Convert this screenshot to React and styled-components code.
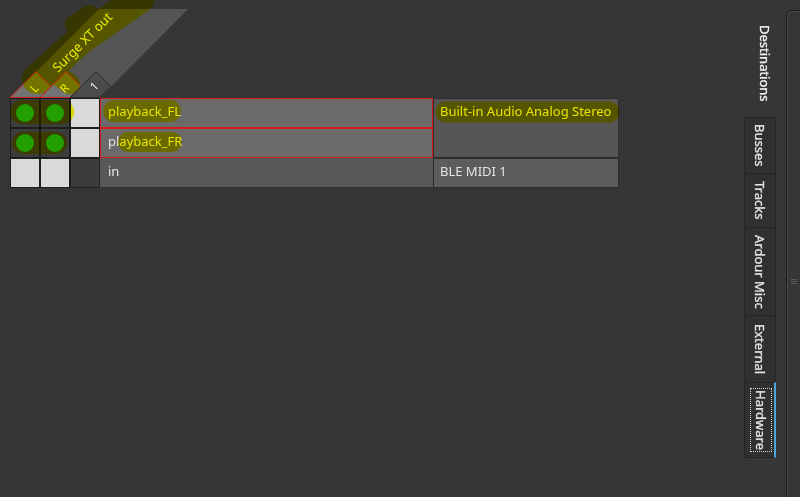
import React from 'react';
import styled, { createGlobalStyle } from 'styled-components';

const colors = {
  bg: '#363636',
  line: '#1d1d1d',
  red: '#d11d1d',
  text: '#e4e4e4',
  tabBorder: '#242424',
};

const GlobalStyle = createGlobalStyle`
  html, body {
    margin: 0;
    padding: 0;
    background: ${colors.bg};
  }
  body {
    font-family: "Noto Sans", "DejaVu Sans", sans-serif;
    font-size: 13px;
    color: ${colors.text};
  }
`;

const channels = [
  { name: 'L', hot: true },
  { name: 'R', hot: true },
  { name: '1', hot: false },
];

const rows = [
  { name: 'playback_FL', hot: true, cells: ['on', 'on', 'na'] },
  { name: 'playback_FR', hot: true, cells: ['on', 'on', 'na'] },
  { name: 'in', hot: false, cells: ['na', 'na', 'open'] },
];

const devices = [
  { name: 'Built-in Audio Analog Stereo', span: 2, shade: '#555555' },
  { name: 'BLE MIDI 1', span: 1, shade: '#5d5d5d' },
];

const tabs = [
  { name: 'Busses', h: 56 },
  { name: 'Tracks', h: 54 },
  { name: 'Ardour Misc', h: 88 },
  { name: 'External', h: 67 },
  { name: 'Hardware', h: 76, active: true },
];

// highlighter marks, page coordinates
const marks = [
  { d: 'M 37 79 L 80 40 L 140 -2', w: 30 },
  { d: 'M 56 74 L 70 84', w: 20 },
  { d: 'M 74 24 L 90 14', w: 18 },
  { d: 'M 22 112 L 62 112', w: 24 },
  { d: 'M 23 143 L 56 143', w: 22 },
  { d: 'M 114 111 L 170 111', w: 22 },
  { d: 'M 128 142 L 172 142', w: 20 },
  { d: 'M 446 112 L 609 112', w: 21 },
];

const channelShape = (x) =>
  `${x},88.5 ${x + 26},62.5 ${x + 41},77.5 ${x + 30},88.5`;

const ColumnHeader = () => (
  <HeaderSvg width="180" height="89" viewBox="0 0 180 89">
    <polygon points="0,89 89,0 178,0 90,89" fill="#555555" />
    <text
      x="72"
      y="33"
      transform="rotate(-45 72 33)"
      textAnchor="middle"
      dominantBaseline="central"
      fontSize="13"
    >
      Surge XT out
    </text>
    {channels.map((c, i) => {
      const cx = i * 30 + 24;
      const cy = i === 2 ? 77 : 79;
      return (
        <g key={c.name}>
          <polygon
            points={channelShape(i * 30)}
            fill={c.hot ? '#737373' : '#4b4b4b'}
            stroke={c.hot ? colors.red : '#2b2b2b'}
            strokeWidth="1"
          />
          <text
            x={cx}
            y={cy}
            transform={`rotate(-45 ${cx} ${cy})`}
            textAnchor="middle"
            dominantBaseline="central"
            fontSize="11.5"
          >
            {c.name}
          </text>
        </g>
      );
    })}
  </HeaderSvg>
);

const App = () => (
  <Page>
    <GlobalStyle />
    <Main>
      <ColumnHeader />
      <Table>
        <Grid>
          {rows.map((r) =>
            r.cells.map((kind, i) => (
              <Cell key={r.name + i} $na={kind === 'na'}>
                {kind === 'on' && <Dot />}
              </Cell>
            ))
          )}
        </Grid>
        <LabelCol>
          {rows.map((r) => (
            <RowLabel key={r.name} $hot={r.hot}>
              {r.name}
            </RowLabel>
          ))}
        </LabelCol>
        <DeviceCol>
          {devices.map((d) => (
            <DeviceCell key={d.name} $span={d.span} $shade={d.shade}>
              {d.name}
            </DeviceCell>
          ))}
        </DeviceCol>
      </Table>
    </Main>

    <Side>
      <TabArea>
        <Title>Destinations</Title>
        <TabList>
          {tabs.map((t) => (
            <Tab key={t.name} $h={t.h} $active={t.active}>
              {t.active ? <Focus>{t.name}</Focus> : t.name}
            </Tab>
          ))}
        </TabList>
      </TabArea>
      <Frame>
        <Grip>
          <i />
          <i />
          <i />
        </Grip>
      </Frame>
    </Side>

    <Highlighter width="800" height="497" viewBox="0 0 800 497">
      {marks.map((m, i) => (
        <path
          key={i}
          d={m.d}
          stroke="#ffff00"
          strokeWidth={m.w}
          strokeLinecap="round"
          strokeLinejoin="round"
          fill="none"
        />
      ))}
    </Highlighter>
  </Page>
);

export default App;

const Page = styled.div`
  position: relative;
  display: flex;
  width: 800px;
  height: 497px;
  overflow: hidden;
  background: ${colors.bg};
`;

const Main = styled.div`
  flex: 1;
  padding: 9px 0 0 10px;
`;

const HeaderSvg = styled.svg`
  display: block;
  font-family: "Noto Sans", "DejaVu Sans", sans-serif;
  text {
    fill: #ececec;
  }
`;

const Table = styled.div`
  display: flex;
  align-items: flex-start;
`;

const Grid = styled.div`
  display: grid;
  grid-template-columns: repeat(3, 28px);
  grid-auto-rows: 28px;
  gap: 2px;
  padding: 1px;
  background: ${colors.line};
`;

const Cell = styled.div`
  display: flex;
  align-items: center;
  justify-content: center;
  background: ${(p) => (p.$na ? '#d9d9d9' : '#3c3c3c')};
`;

const Dot = styled.span`
  width: 18px;
  height: 18px;
  border-radius: 50%;
  background: #22a012;
`;

const LabelCol = styled.div`
  width: 333px;
  display: flex;
  flex-direction: column;
`;

const RowLabel = styled.div`
  box-sizing: border-box;
  height: 30px;
  padding: 3px 0 0 7px;
  line-height: 18px;
  border: 1px solid ${(p) => (p.$hot ? colors.red : 'transparent')};
  border-bottom-color: ${(p) => (p.$hot ? colors.red : '#2c2c2c')};
  background: ${(p) => (p.$hot ? '#6a6a6a' : '#585858')};
  color: ${colors.text};
`;

const DeviceCol = styled.div`
  width: 186px;
  display: flex;
  flex-direction: column;
`;

const DeviceCell = styled.div`
  box-sizing: border-box;
  height: ${(p) => p.$span * 30}px;
  padding: 3px 0 0 6px;
  line-height: 18px;
  border: 1px solid #2c2c2c;
  background: ${(p) => p.$shade};
  color: ${colors.text};
`;

const Side = styled.div`
  display: flex;
  width: 56px;
  flex-shrink: 0;
`;

const TabArea = styled.div`
  width: 42px;
  display: flex;
  flex-direction: column;
`;

const Title = styled.div`
  writing-mode: vertical-rl;
  align-self: center;
  margin-top: 25px;
  height: 78px;
  line-height: 18px;
  color: #f2f2f2;
  -webkit-text-stroke: 0.3px currentColor;
`;

const TabList = styled.div`
  width: 32px;
  margin-top: 14px;
  display: flex;
  flex-direction: column;
`;

const Tab = styled.div`
  box-sizing: border-box;
  height: ${(p) => p.$h}px;
  writing-mode: vertical-rl;
  display: flex;
  align-items: center;
  justify-content: center;
  line-height: 18px;
  padding-left: ${(p) => (p.$active ? '3px' : '0')};
  background: #303030;
  border: 1px solid ${colors.tabBorder};
  border-bottom: none;
  border-right: ${(p) => (p.$active ? '2px solid #4ea4dc' : `1px solid ${colors.tabBorder}`)};
  border-radius: 3px 0 0 3px;
  color: #e6e6e6;
  -webkit-text-stroke: 0.3px currentColor;

  &:last-child {
    border-bottom: 1px solid ${colors.tabBorder};
  }
`;

const Focus = styled.span`
  padding: 1px 1px;
  outline: 1px dotted #d4d4d4;
  outline-offset: 0;
`;

const Frame = styled.div`
  flex: 1;
  margin-top: 10px;
  border-left: 1px solid #1f1f1f;
  border-top: 1px solid #1f1f1f;
  border-top-left-radius: 5px;
  box-shadow: inset 1px 1px 0 #474747;
  display: flex;
  flex-direction: column;
`;

const Grip = styled.div`
  margin: 268px 0 0 4px;
  width: 6px;
  display: flex;
  flex-direction: column;
  gap: 1px;

  i {
    display: block;
    height: 1px;
    background: #5a5a5a;
  }
`;

const Highlighter = styled.svg`
  position: absolute;
  top: 0;
  left: 0;
  pointer-events: none;
  mix-blend-mode: multiply;
`;
